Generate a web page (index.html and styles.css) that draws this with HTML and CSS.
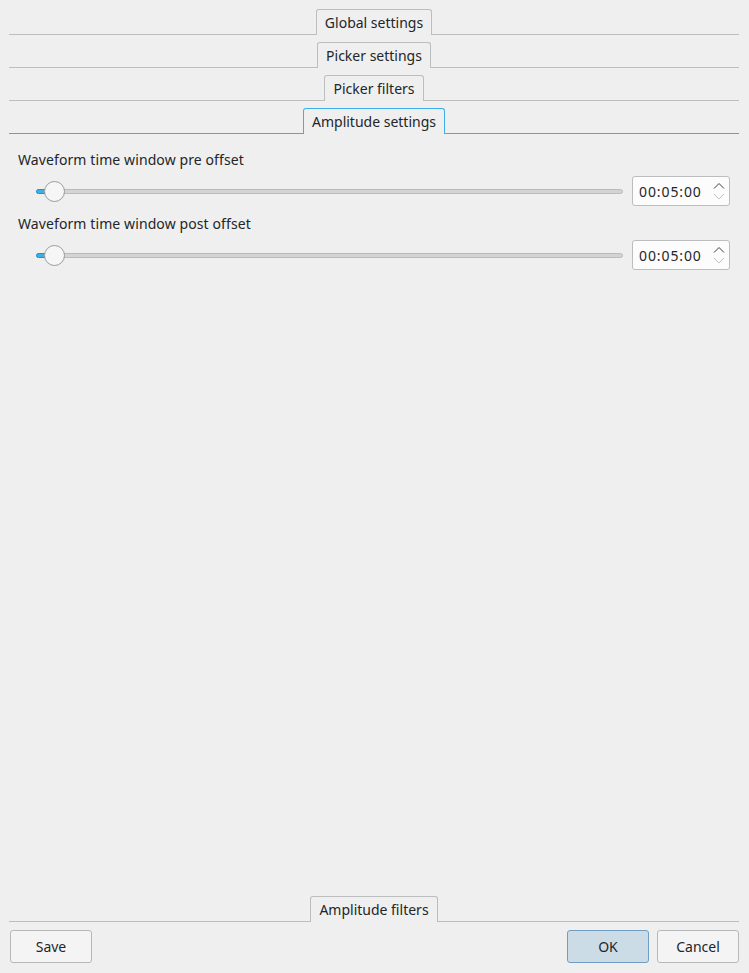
FILE: index.html
```html
<!DOCTYPE html>
<html>
<head>
<meta charset="utf-8">
<link rel="stylesheet" href="styles.css">
</head>
<body>
<div class="tabbar"><div class="tab">Global settings</div></div>
<div class="tabbar"><div class="tab">Picker settings</div></div>
<div class="tabbar"><div class="tab">Picker filters</div></div>
<div class="tabbar active"><div class="tab">Amplitude settings</div></div>

<main class="content">
  <div class="group">
    <div class="label">Waveform time window pre offset</div>
    <div class="row">
      <div class="slider"><div class="fill"></div><div class="handle"></div></div>
      <div class="spin"><span class="val">00:05:00</span>
        <span class="arrows">
          <svg width="12" height="20" viewBox="0 0 12 20"><path d="M1 7.5 L6 2.5 L11 7.5" fill="none" stroke="#3a3d40" stroke-width="1"/><path d="M1 13 L6 18 L11 13" fill="none" stroke="#bfc1c3" stroke-width="1"/></svg>
        </span>
      </div>
    </div>
  </div>
  <div class="group">
    <div class="label">Waveform time window post offset</div>
    <div class="row">
      <div class="slider"><div class="fill"></div><div class="handle"></div></div>
      <div class="spin"><span class="val">00:05:00</span>
        <span class="arrows">
          <svg width="12" height="20" viewBox="0 0 12 20"><path d="M1 7.5 L6 2.5 L11 7.5" fill="none" stroke="#3a3d40" stroke-width="1"/><path d="M1 13 L6 18 L11 13" fill="none" stroke="#bfc1c3" stroke-width="1"/></svg>
        </span>
      </div>
    </div>
  </div>
</main>

<div class="tabbar bottom"><div class="tab">Amplitude filters</div></div>
<div class="buttons">
  <button class="btn">Save</button>
  <div class="spacer"></div>
  <button class="btn default">OK</button>
  <button class="btn">Cancel</button>
</div>
</body>
</html>
```
FILE: styles.css
```css
html, body {
  margin: 0;
  height: 100%;
}
body {
  box-sizing: border-box;
  background: #efefef;
  color: #232629;
  font-family: "Noto Sans", "DejaVu Sans", sans-serif;
  font-size: 14px;
  display: flex;
  flex-direction: column;
  padding: 2px 0 0 0;
}
.tabbar {
  display: flex;
  justify-content: center;
  margin: 0 10px 0 9px;
  padding-top: 7px;
  border-bottom: 1px solid #bcbdbe;
}
.tab {
  height: 24px;
  margin-bottom: -1px;
  box-sizing: content-box;
  padding: 0 8px 1px 8px;
  border: 1px solid #bcbdbe;
  border-bottom: none;
  border-radius: 3px 3px 0 0;
  background: #efefef;
  display: flex;
  align-items: center;
  line-height: 19px;
}
.tabbar.active {
  border-bottom-color: #3daee9;
}
.tabbar.active .tab {
  border-color: #3daee9;
}
.content {
  flex: 1;
  padding: 16px 19px 0 18px;
}
.group {
  margin-bottom: 8px;
}
.label {
  line-height: 19px;
  height: 19px;
  letter-spacing: 0.1px;
}
.row {
  display: flex;
  align-items: center;
  margin-top: 7px;
  height: 30px;
}
.slider {
  flex: 1;
  margin-left: 18px;
  margin-right: 9px;
  height: 5px;
  border-radius: 3px;
  background: #d3d4d5;
  border: 1px solid #babbbc;
  box-sizing: border-box;
  position: relative;
}
.fill {
  position: absolute;
  left: -1px;
  top: -1px;
  width: 14px;
  height: 5px;
  border-radius: 3px 0 0 3px;
  background: #3daee9;
  border: 1px solid #2f8dbf;
  box-sizing: border-box;
}
.handle {
  position: absolute;
  left: 7px;
  top: -9px;
  width: 21px;
  height: 21px;
  box-sizing: border-box;
  border-radius: 50%;
  border: 1px solid #9a9b9c;
  background: #f6f6f6;
}
.spin {
  width: 98px;
  height: 30px;
  box-sizing: border-box;
  background: #fcfcfc;
  border: 1px solid #bcbdbe;
  border-radius: 3px;
  display: flex;
  align-items: center;
  padding-left: 6px;
}
.val {
  flex: 1;
  line-height: 19px;
  letter-spacing: 0.9px;
}
.arrows {
  width: 12px;
  display: flex;
  justify-content: center;
  align-items: center;
  margin-right: 4px;
}
.arrows svg {
  display: block;
}
.tabbar.bottom {
  padding-top: 0;
}
.buttons {
  display: flex;
  align-items: center;
  padding: 8px 10px 10px 10px;
  gap: 8px;
}
.spacer {
  flex: 1;
}
.btn {
  font-family: "Noto Sans", "DejaVu Sans", sans-serif;
  font-size: 14px;
  color: #232629;
  width: 82px;
  height: 33px;
  box-sizing: border-box;
  background: #f4f4f4;
  border: 1px solid #b7b8b9;
  border-radius: 3px;
  padding: 0;
}
.btn.default {
  background: #cbdce7;
  border-color: #6f9ec2;
}
```
